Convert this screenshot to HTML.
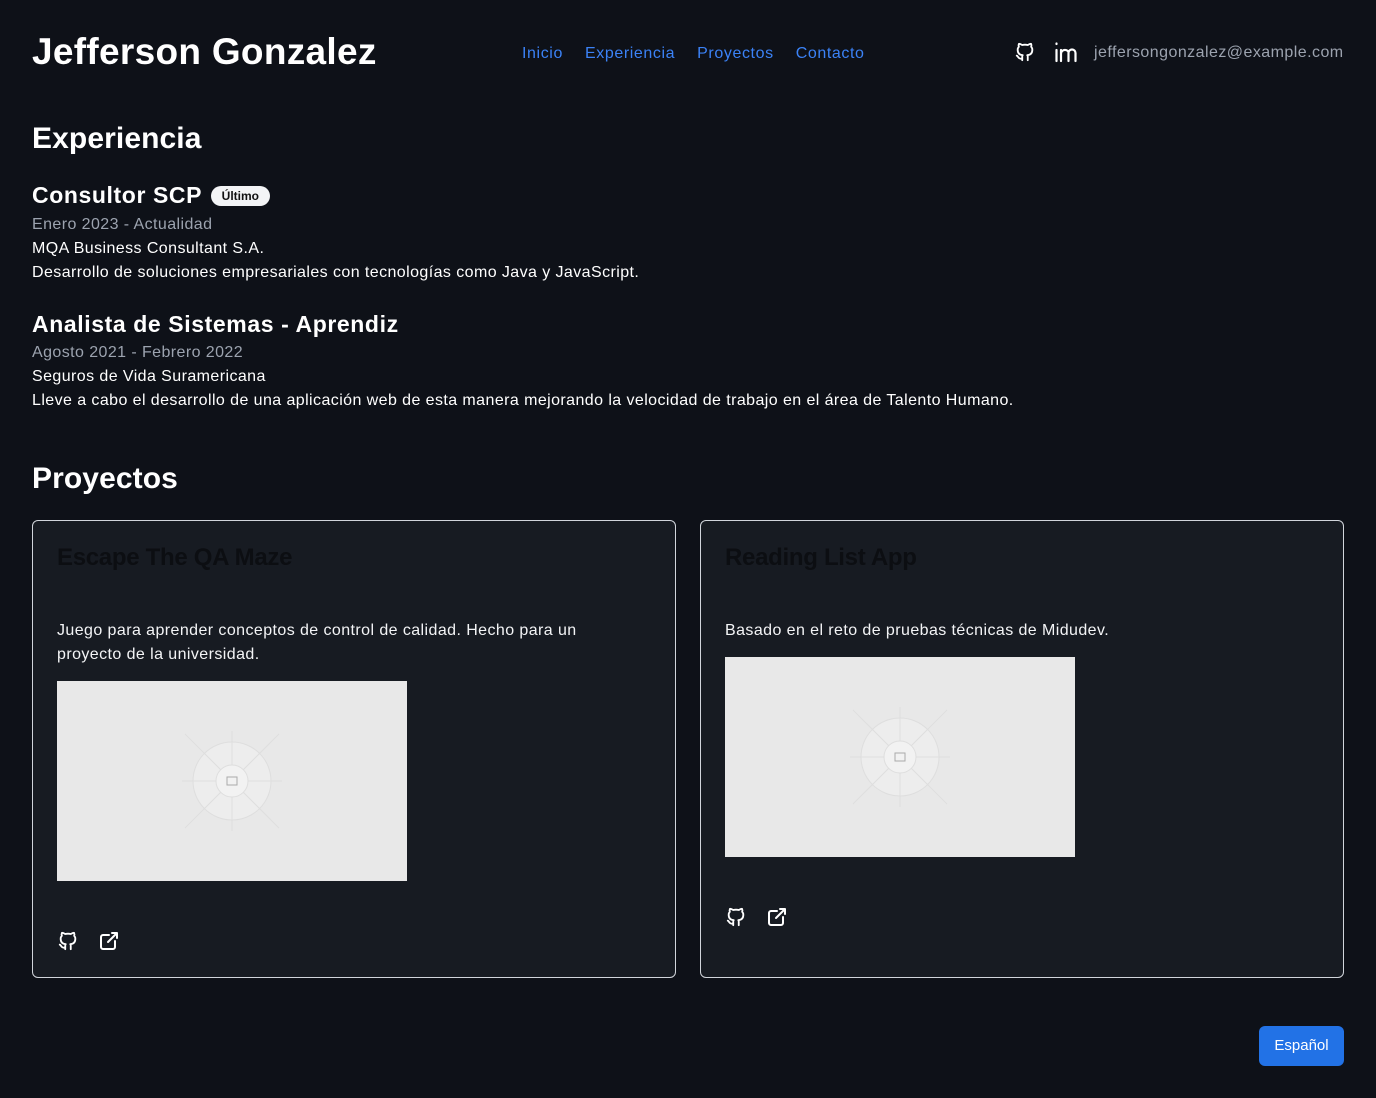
<!DOCTYPE html>
<html><head><meta charset="utf-8"><style>
*{box-sizing:border-box;margin:0;padding:0}
body{width:1376px;height:1098px;background:#0e1118;color:#fff;font-family:"Liberation Sans",sans-serif;position:relative;overflow:hidden}
.abs{position:absolute}
h1{position:absolute;left:32px;top:31px;font-size:37px;font-weight:700;letter-spacing:0.3px}
nav{position:absolute;left:522px;top:45px;font-size:16px;color:#3b82f6;letter-spacing:0.6px;white-space:nowrap}
nav span{margin-right:22px}
.h2{position:absolute;left:32px;font-size:30px;font-weight:700;letter-spacing:0.1px}
.h3{position:absolute;left:32px;font-size:23px;font-weight:700;letter-spacing:0.6px}
.t{position:absolute;left:32px;font-size:16px;line-height:24px;letter-spacing:0.42px;white-space:nowrap}
.g{color:#9ca3af}
.badge{display:inline-block;background:#f3f4f6;color:#111;font-size:12px;font-weight:700;border-radius:11px;padding:3px 11px;vertical-align:3px;margin-left:2px;letter-spacing:0}
.card{position:absolute;top:520px;width:644px;height:458px;border:1px solid #d1d5db;border-radius:6px;background:#171b22}
.card .ti{position:absolute;left:24px;top:23px;font-size:24px;font-weight:700;color:#0c0e12;letter-spacing:-0.3px}
.card .d{position:absolute;left:24px;top:98px;font-size:16px;line-height:24px;color:#f3f4f6;width:560px;letter-spacing:0.42px}
.img{position:absolute;left:24px;width:350px;height:200px;background:#e8e8e8}
.ic{position:absolute;left:24px}
.btn{position:absolute;left:1259px;top:1026px;width:85px;height:40px;background:#2272e6;border-radius:6px;font-size:15px;color:#fff;text-align:center;line-height:40px}
</style></head><body>
<h1>Jefferson Gonzalez</h1>
<nav><span>Inicio</span><span>Experiencia</span><span>Proyectos</span><span>Contacto</span></nav>
<svg class="abs" style="left:1014px;top:40px" width="22" height="24" viewBox="0 0 24 24" fill="none" stroke="#fff" stroke-width="2" stroke-linecap="round" stroke-linejoin="round"><path d="M9 19c-4.3 1.4-4.3-2.5-6-3m12 5v-3.5c0-1 .1-1.4-.5-2 2.8-.3 5.5-1.4 5.5-6a4.6 4.6 0 0 0-1.3-3.2 4.2 4.2 0 0 0-.1-3.2s-1.1-.3-3.5 1.3a12.3 12.3 0 0 0-6.2 0C6.5 2.8 5.4 3.1 5.4 3.1a4.2 4.2 0 0 0-.1 3.2A4.6 4.6 0 0 0 4 9.5c0 4.6 2.7 5.7 5.5 6-.6.6-.6 1.2-.5 2V21"/></svg>
<svg class="abs" style="left:1054px;top:40px" width="24" height="24" viewBox="0 0 24 24" fill="none" stroke="#fff" stroke-width="2.2" stroke-linecap="round"><path d="M2.5 10v11M2.5 3.5v.5M7 21V10M7 21v-7a4 4 0 0 1 7.5-2M14.5 21v-8a3.5 3.5 0 0 1 7 0v8"/></svg>
<div class="abs" style="left:1094px;top:44px;font-size:16px;color:#9ca3af;letter-spacing:0.45px">jeffersongonzalez@example.com</div>

<div class="h2" style="top:122px">Experiencia</div>
<div class="h3" style="top:182px">Consultor SCP <span class="badge">Último</span></div>
<div class="t g" style="top:213px">Enero 2023 - Actualidad</div>
<div class="t" style="top:237px">MQA Business Consultant S.A.</div>
<div class="t" style="top:261px">Desarrollo de soluciones empresariales con tecnologías como Java y JavaScript.</div>
<div class="h3" style="top:311px">Analista de Sistemas - Aprendiz</div>
<div class="t g" style="top:341px">Agosto 2021 - Febrero 2022</div>
<div class="t" style="top:365px">Seguros de Vida Suramericana</div>
<div class="t" style="top:389px">Lleve a cabo el desarrollo de una aplicación web de esta manera mejorando la velocidad de trabajo en el área de Talento Humano.</div>

<div class="h2" style="top:462px">Proyectos</div>

<div class="card" style="left:32px">
<div class="ti">Escape The QA Maze</div>
<div class="d">Juego para aprender conceptos de control de calidad. Hecho para un proyecto de la universidad.</div>
<div class="img" style="top:160px"><svg width="350" height="200"><g stroke="#dedede" stroke-width="1" fill="none"><circle cx="175" cy="100" r="39" fill="#ededed"/><line x1="128" y1="53" x2="222" y2="147"/><line x1="222" y1="53" x2="128" y2="147"/><line x1="175" y1="50" x2="175" y2="150"/><line x1="125" y1="100" x2="225" y2="100"/><circle cx="175" cy="100" r="16" fill="#f2f2f2"/><rect x="170" y="96" width="10" height="8" stroke="#aaa"/></g></svg></div>
<svg class="ic" style="top:408px" width="22" height="24" viewBox="0 0 24 24" fill="none" stroke="#fff" stroke-width="2" stroke-linecap="round" stroke-linejoin="round"><path d="M9 19c-4.3 1.4-4.3-2.5-6-3m12 5v-3.5c0-1 .1-1.4-.5-2 2.8-.3 5.5-1.4 5.5-6a4.6 4.6 0 0 0-1.3-3.2 4.2 4.2 0 0 0-.1-3.2s-1.1-.3-3.5 1.3a12.3 12.3 0 0 0-6.2 0C6.5 2.8 5.4 3.1 5.4 3.1a4.2 4.2 0 0 0-.1 3.2A4.6 4.6 0 0 0 4 9.5c0 4.6 2.7 5.7 5.5 6-.6.6-.6 1.2-.5 2V21"/></svg>
<svg class="ic" style="top:408px;left:64px" width="24" height="24" viewBox="0 0 24 24" fill="none" stroke="#fff" stroke-width="2" stroke-linecap="round" stroke-linejoin="round"><path d="M12 6H6a2 2 0 0 0-2 2v10a2 2 0 0 0 2 2h10a2 2 0 0 0 2-2v-6M11 13l9-9M15 4h5v5"/></svg>
</div>

<div class="card" style="left:700px">
<div class="ti">Reading List App</div>
<div class="d">Basado en el reto de pruebas técnicas de Midudev.</div>
<div class="img" style="top:136px"><svg width="350" height="200"><g stroke="#dedede" stroke-width="1" fill="none"><circle cx="175" cy="100" r="39" fill="#ededed"/><line x1="128" y1="53" x2="222" y2="147"/><line x1="222" y1="53" x2="128" y2="147"/><line x1="175" y1="50" x2="175" y2="150"/><line x1="125" y1="100" x2="225" y2="100"/><circle cx="175" cy="100" r="16" fill="#f2f2f2"/><rect x="170" y="96" width="10" height="8" stroke="#aaa"/></g></svg></div>
<svg class="ic" style="top:384px" width="22" height="24" viewBox="0 0 24 24" fill="none" stroke="#fff" stroke-width="2" stroke-linecap="round" stroke-linejoin="round"><path d="M9 19c-4.3 1.4-4.3-2.5-6-3m12 5v-3.5c0-1 .1-1.4-.5-2 2.8-.3 5.5-1.4 5.5-6a4.6 4.6 0 0 0-1.3-3.2 4.2 4.2 0 0 0-.1-3.2s-1.1-.3-3.5 1.3a12.3 12.3 0 0 0-6.2 0C6.5 2.8 5.4 3.1 5.4 3.1a4.2 4.2 0 0 0-.1 3.2A4.6 4.6 0 0 0 4 9.5c0 4.6 2.7 5.7 5.5 6-.6.6-.6 1.2-.5 2V21"/></svg>
<svg class="ic" style="top:384px;left:64px" width="24" height="24" viewBox="0 0 24 24" fill="none" stroke="#fff" stroke-width="2" stroke-linecap="round" stroke-linejoin="round"><path d="M12 6H6a2 2 0 0 0-2 2v10a2 2 0 0 0 2 2h10a2 2 0 0 0 2-2v-6M11 13l9-9M15 4h5v5"/></svg>
</div>

<div class="btn">Español</div>
</body></html>
